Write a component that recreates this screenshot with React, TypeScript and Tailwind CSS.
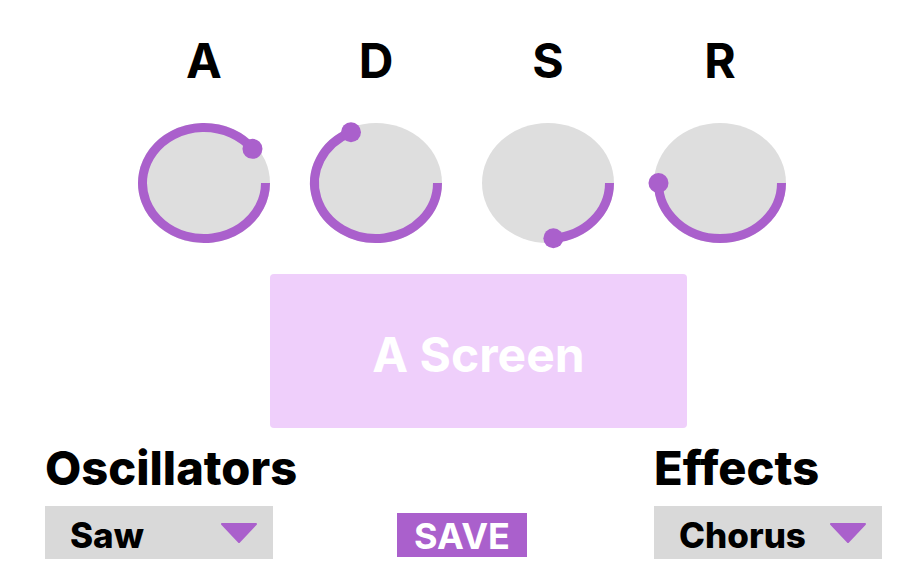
import React from "react";

const PURPLE = "#aa60cc";

function Knob({ angle }: { angle: number }) {
  const w = 132;
  const h = 120;
  const cx = w / 2;
  const cy = h / 2;
  const rx = 61.5;
  const ry = 55.5;
  const t = (angle * Math.PI) / 180;
  const ex = cx + rx * Math.cos(t);
  const ey = cy + ry * Math.sin(t);
  const large = angle > 180 ? 1 : 0;
  const d = `M ${cx + rx} ${cy} A ${rx} ${ry} 0 ${large} 1 ${ex} ${ey}`;
  return (
    <svg width={w} height={h} viewBox={`0 0 ${w} ${h}`} className="block overflow-visible">
      <ellipse cx={cx} cy={cy} rx={w / 2} ry={h / 2} fill="#dedede" />
      <path d={d} fill="none" stroke={PURPLE} strokeWidth={9} />
      <circle cx={ex} cy={ey} r={10} fill={PURPLE} />
    </svg>
  );
}

function Dropdown({ label }: { label: string }) {
  return (
    <div className="flex h-[53px] w-[228px] items-center justify-between bg-[#d9d9d9] pl-[25px] pr-[15px]">
      <span className="pt-[5px] text-[35px] font-extrabold leading-none text-black">{label}</span>
      <svg width="38" height="20" viewBox="0 0 38 20" className="block">
        <path d="M2 1 L36 1 L19 19 Z" fill={PURPLE} stroke={PURPLE} strokeWidth="2" strokeLinejoin="round" />
      </svg>
    </div>
  );
}

export default function App() {
  const knobs = [
    { l: "A", a: 322 },
    { l: "D", a: 246 },
    { l: "S", a: 85 },
    { l: "R", a: 180 },
  ];
  return (
    <div
      className="flex h-[573px] w-[924px] flex-col bg-white"
      style={{ fontFamily: "Inter, 'Noto Sans', sans-serif" }}
    >
      <div className="flex justify-center gap-[40px] pt-[37px]">
        {knobs.map((k) => (
          <div key={k.l} className="flex w-[132px] flex-col items-center gap-[38px]">
            <span className="text-[48px] font-bold leading-[48px] text-black">{k.l}</span>
            <Knob angle={k.a} />
          </div>
        ))}
      </div>
      <div className="mt-[31px] flex justify-center pl-[33px]">
        <div className="flex h-[154px] w-[417px] items-center justify-center rounded-[4px] bg-[#efcffb] pt-[8px]">
          <span className="text-[48px] font-bold leading-none text-white">A Screen</span>
        </div>
      </div>
      <div className="grid grid-cols-[1fr_auto_1fr] items-end pl-[45px] pr-[42px] pt-[17px]">
        <div className="flex flex-col gap-[15px] justify-self-start">
          <span className="text-[47px] font-extrabold leading-[46px] text-black">Oscillators</span>
          <Dropdown label="Saw" />
        </div>
        <div className="mb-[2px] mr-[3px] flex h-[44px] w-[130px] items-center justify-center bg-[#aa60cc] pt-[2px]">
          <span className="text-[36px] font-bold leading-none text-white">SAVE</span>
        </div>
        <div className="flex flex-col gap-[15px] justify-self-end">
          <span className="text-[47px] font-extrabold leading-[46px] text-black">Effects</span>
          <Dropdown label="Chorus" />
        </div>
      </div>
    </div>
  );
}
